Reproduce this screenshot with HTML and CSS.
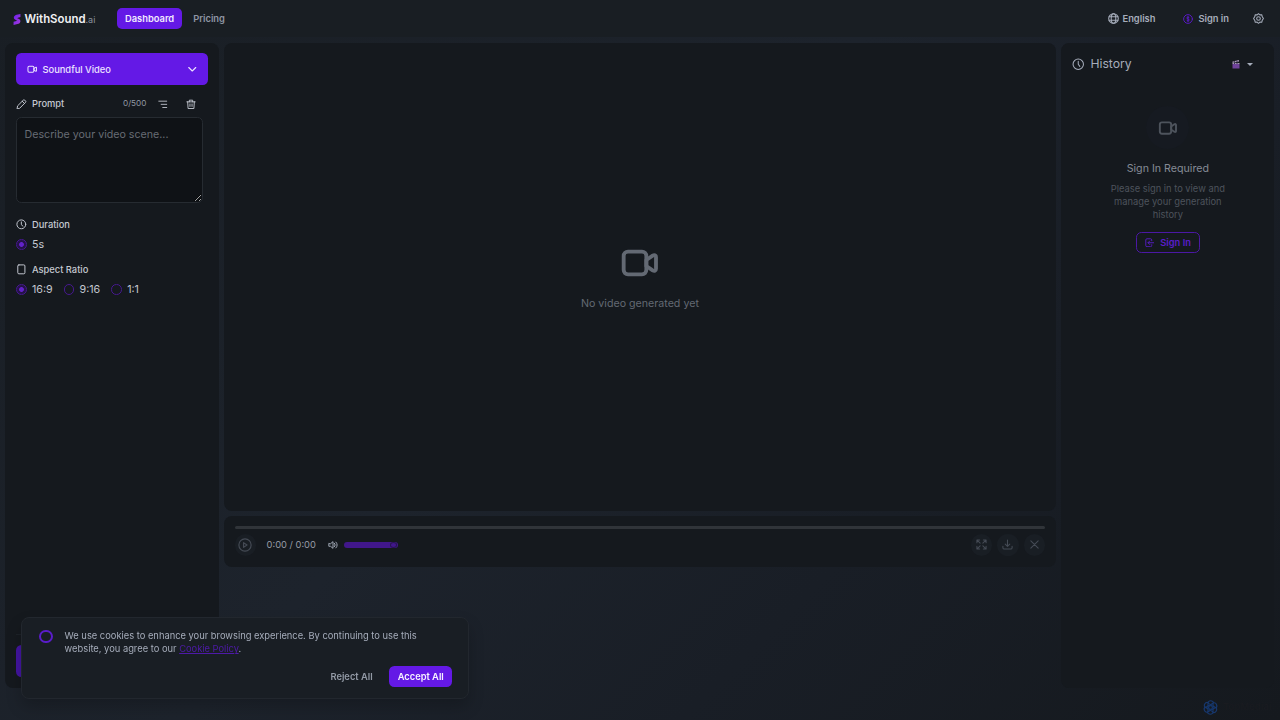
FILE: index.html
```
<!DOCTYPE html>
<html lang="en">
<head>
    <meta charset="UTF-8">
    <meta name="viewport" content="width=device-width, initial-scale=1.0">
    <title>Dashboard - WithSound.ai</title>
    <link rel="stylesheet" href="styles.css">
</head>
<body>
    <!-- Shared icons -->
    <svg class="sprite">
        <symbol id="video" viewBox="0 0 24 24">
            <rect x="2.2" y="5.200" width="13.600" height="13.600" rx="2.600"/>
            <path d="M15.800 10.200l3.800-2.600c1-.6 2-.3 2 .9v7c0 1.200-1 1.500-2 .9l-3.800-2.600z"/>
        </symbol>
        <symbol id="clock" viewBox="0 0 24 24">
            <circle cx="12" cy="12" r="10"/>
            <path d="M12 6.500V12l3 4"/>
        </symbol>
    </svg>

    <!-- Navbar -->
    <header class="navbar">
        <a class="brand" href="#">
            <svg class="brand-logo" viewBox="0 0 16 24">
                <defs>
                    <linearGradient id="logo-fill" x1="0" y1="0" x2="1" y2="1">
                        <stop offset="0" stop-color="#6a20f0"/>
                        <stop offset="1" stop-color="#a83bd8"/>
                    </linearGradient>
                </defs>
                <path fill="url(#logo-fill)" d="M7 1.500L15.500 0v6.500L10 8c-1.500.500-1.500 1.500 0 2l2.500 1c4.500 2.500 3.500 9-1.500 10.500L.500 24v-7l6-1.500c1.500-.500 1.500-1.500 0-2l-3-1.500C-1 9.500 1 3 7 1.500z"/>
            </svg>
            <span class="brand-name">WithSound</span><span class="brand-tld">.ai</span>
        </a>
        <nav class="nav-links">
            <a class="nav-link active" href="#">Dashboard</a>
            <a class="nav-link" href="#">Pricing</a>
        </nav>
        <div class="nav-right">
            <a class="language" href="#">
                <svg class="icon" viewBox="0 0 24 24"><circle cx="12" cy="12" r="10.500"/><ellipse cx="12" cy="12" rx="5" ry="10.500"/><path d="M2.500 8h19M2.500 16h19"/></svg>
                English
            </a>
            <a class="signin" href="#">
                <svg class="icon purple" viewBox="0 0 24 24"><circle cx="12" cy="12" r="10.500"/><path d="M15 9c-1-2-6-2-6 .500 0 3 6 2 6 5 0 2.500-5 2.500-6 .500M12 5.500v13"/></svg>
                Sign in
            </a>
            <svg class="icon settings" viewBox="0 0 24 24"><path d="M12 1.500l3 2.600 4.300-.300.700 4 2.700 4.200-2.700 4.200-.700 4-4.300-.300-3 2.600-3-2.600-4.300.300-.700-4L1.300 12 4 7.800l.700-4 4.300.300z"/><circle cx="12" cy="12" r="4"/></svg>
        </div>
    </header>

    <main class="layout">
        <!-- Generator form -->
        <aside class="panel sidebar">
            <button class="mode">
                <svg class="icon" viewBox="0 0 24 24"><use href="#video"/></svg>
                <span>Soundful Video</span>
                <svg class="icon chevron" viewBox="0 0 24 24"><path d="M4 8l8 8 8-8"/></svg>
            </button>

            <div class="label prompt-label">
                <svg class="icon" viewBox="0 0 24 24"><path d="M2.500 21.500l1-6L16.500 2.500c1-1 2-1 3 0l2 2c1 1 1 2 0 3L8.500 20.500zM14 5l5 5"/></svg>
                <span>Prompt</span>
                <span class="counter">0/500</span>
                <svg class="icon lines" viewBox="0 0 24 24"><path d="M2 4h20M8 12h14M12 20h10"/></svg>
                <svg class="icon trash" viewBox="0 0 24 24"><path d="M2 6h20M8 6V2h8v4M4 6l1 16h14l1-16M9.500 11v6M14.500 11v6"/></svg>
            </div>
            <textarea class="prompt" placeholder="Describe your video scene..."></textarea>

            <div class="label duration-label">
                <svg class="icon" viewBox="0 0 24 24"><use href="#clock"/></svg>
                <span>Duration</span>
            </div>
            <div class="options">
                <label><input type="radio" name="duration" checked>5s</label>
            </div>

            <div class="label ratio-label">
                <svg class="icon" viewBox="0 0 24 24"><rect x="4" y="2" width="16" height="20" rx="2.500"/></svg>
                <span>Aspect Ratio</span>
            </div>
            <div class="options">
                <label><input type="radio" name="ratio" checked>16:9</label>
                <label><input type="radio" name="ratio">9:16</label>
                <label><input type="radio" name="ratio">1:1</label>
            </div>

            <div class="generate-wrap">
                <div class="generate"></div>
            </div>
        </aside>

        <!-- Preview and player -->
        <section class="center">
            <div class="panel preview">
                <svg class="icon" viewBox="0 0 24 24"><use href="#video"/></svg>
                <p>No video generated yet</p>
            </div>
            <div class="panel player">
                <div class="progress"></div>
                <div class="controls">
                    <span class="round">
                        <svg class="icon play" viewBox="0 0 24 24"><circle cx="12" cy="12" r="10.500"/><path d="M9.500 8l6 4-6 4z"/></svg>
                    </span>
                    <span class="time">0:00 / 0:00</span>
                    <svg class="icon speaker" viewBox="0 0 24 24"><path d="M2 9v6h4l6 5V4L6 9zM15.500 8c2 2.500 2 5.500 0 8M19 5c4 4 4 10 0 14"/></svg>
                    <span class="volume"><i></i></span>
                    <div class="actions">
                        <span class="round"><svg class="icon" viewBox="0 0 24 24"><path d="M9 9L3 3M2 8V2h6M15 9l6-6M16 2h6v6M9 15l-6 6M2 16v6h6M15 15l6 6M16 22h6v-6"/></svg></span>
                        <span class="round"><svg class="icon" viewBox="0 0 24 24"><path d="M12 2v14M7 11l5 5 5-5M2 16v3c0 2 1 3 3 3h14c2 0 3-1 3-3v-3"/></svg></span>
                        <span class="round"><svg class="icon" viewBox="0 0 24 24"><path d="M4 4l16 16M20 4L4 20"/></svg></span>
                    </div>
                </div>
            </div>
        </section>

        <!-- History -->
        <aside class="panel history">
            <div class="history-head">
                <svg class="icon" viewBox="0 0 24 24"><use href="#clock"/></svg>
                <h2>History</h2>
                <svg class="clapper" viewBox="0 0 16 18"><path fill="#70439b" d="M1 8h14v9H1z"/><path fill="#a79bb5" d="M1 3l13-3v3L1 6zM1 6h14v2H1z"/><path stroke="#3b2b52" stroke-width="2" d="M4 2l2 4M9 1l2 4M4 7h2M9 7h2"/></svg>
                <span class="caret"></span>
            </div>
            <div class="empty">
                <span class="empty-icon"><svg class="icon" viewBox="0 0 24 24"><use href="#video"/></svg></span>
                <h3>Sign In Required</h3>
                <p>Please sign in to view and manage your generation history</p>
                <button class="signin-btn">
                    <svg class="icon" viewBox="0 0 24 24"><path d="M17 7V5c0-2-1-3-3-3H5C3 2 2 3 2 5v14c0 2 1 3 3 3h9c2 0 3-1 3-3v-2M23 12H8M12 7.500L7.500 12l4.500 4.500"/></svg>
                    Sign In
                </button>
            </div>
        </aside>
    </main>

    <!-- Cookie notice -->
    <div class="cookie">
        <div class="cookie-text">
            <span class="ring"></span>
            <p>We use cookies to enhance your browsing experience. By continuing to use this website, you agree to our <a href="#">Cookie Policy</a>.</p>
        </div>
        <div class="cookie-actions">
            <button class="reject">Reject All</button>
            <button class="accept">Accept All</button>
        </div>
    </div>

    <!-- Corner badge -->
    <div class="badge">
        <svg viewBox="0 0 24 24">
            <g fill="none" stroke="#17386f" stroke-width="1.800">
                <circle cx="12" cy="12" r="3"/>
                <path id="petal" d="M8 10V5c0-5 8-5 9 0M8 5l7 4"/>
                <use href="#petal" transform="rotate(60 12 12)"/>
                <use href="#petal" transform="rotate(120 12 12)"/>
                <use href="#petal" transform="rotate(180 12 12)"/>
                <use href="#petal" transform="rotate(240 12 12)"/>
                <use href="#petal" transform="rotate(300 12 12)"/>
            </g>
        </svg>
        <span>TopMediai</span>
    </div>
</body>
</html>
```
FILE: styles.css
```
* {
    box-sizing: border-box;
}

body {
    font-family: Inter, sans-serif;
    margin: 0;
    height: 100vh;
    overflow: hidden;
    display: flex;
    flex-direction: column;
    font-size: 9.33px;
    line-height: 13.33px;
    color: #a6adbb;
    background: linear-gradient(135deg, #191e24 0%, #1d232c 45%, #191e26 70%, #15191e 100%);
}

h2, h3, p {
    margin: 0;
    font-weight: 400;
}

a {
    color: inherit;
    text-decoration: none;
}

button {
    font: inherit;
    border: none;
    padding: 0;
}

.sprite {
    display: none;
}

.icon {
    width: 11px;
    height: 11px;
    flex: none;
    fill: none;
    stroke: currentColor;
    stroke-width: 2.3;
    stroke-linecap: round;
    stroke-linejoin: round;
}

.purple {
    color: #5a1bc8;
}

/* Navbar */
.navbar {
    display: flex;
    align-items: center;
    height: 37.3px;
    flex: none;
    padding: 0 16px 0 13px;
    background: #191e23;
    font-weight: 600;
}

.brand {
    display: flex;
    align-items: baseline;
    width: 104px;
    padding-top: 1px;
}

.brand-logo {
    width: 8px;
    height: 11px;
    margin-right: 3.5px;
    align-self: center;
}

.brand-name {
    font-size: 11.4px;
    line-height: 15px;
    color: #f0f1f4;
}

.brand-tld {
    font-size: 9px;
    font-weight: 400;
    color: #8b929e;
}

.nav-links {
    display: flex;
    gap: 3px;
}

.nav-link {
    padding: 4px 8px;
    border-radius: 5px;
    color: #8f96a3;
}

.nav-link.active {
    background: #6419e6;
    color: #f2eaff;
}

.nav-right {
    display: flex;
    align-items: center;
    margin-left: auto;
}

.language, .signin {
    display: flex;
    align-items: center;
}

.language {
    gap: 4px;
    margin-right: 28px;
}

.signin {
    gap: 5px;
    margin-right: 24px;
}

.signin .icon {
    width: 10px;
    height: 10px;
}

/* Layout */
.layout {
    display: grid;
    grid-template-columns: 213.3px 832px 213.3px;
    gap: 5.3px;
    height: 650.7px;
    padding: 5.3px 5.3px 0;
}

.panel {
    background: #15191e;
    border-radius: 8px;
}

.sidebar {
    display: flex;
    flex-direction: column;
    padding: 10.7px;
    color: #c5c9d2;
}

.mode {
    display: flex;
    align-items: center;
    gap: 5px;
    height: 32px;
    padding: 0 10.5px 0 11px;
    border-radius: 5.3px;
    background: #6419e6;
    color: #ece3ff;
    font-weight: 500;
}

.mode .icon {
    width: 10.5px;
    height: 10.5px;
}

.mode .chevron {
    margin-left: auto;
    stroke-width: 2.5;
}

.label {
    display: flex;
    align-items: center;
    gap: 5.3px;
    height: 14px;
    font-weight: 500;
}

.label .icon {
    width: 10.7px;
    height: 10.7px;
    stroke-width: 2.2;
}

.prompt-label {
    margin-top: 11.7px;
    padding-right: 5.7px;
}

.counter {
    margin-left: auto;
    font-size: 8.2px;
    font-weight: 400;
    color: #9298a3;
}

.label .lines {
    width: 9.5px;
    margin: 0 13px 0 6.7px;
}

.label .trash {
    width: 10px;
    margin-right: 6px;
}

.prompt {
    width: 186.7px;
    height: 86px;
    margin: 6.3px 0 0;
    padding: 8.6px 7.6px;
    border: 1px solid #262b31;
    border-radius: 5.3px;
    background: #0f1216;
    font-family: inherit;
    font-size: 10.67px;
    line-height: 16px;
    color: #a6adbb;
    resize: vertical;
}

.prompt::placeholder {
    color: #676c74;
}

.duration-label {
    margin-top: 14px;
}

.ratio-label {
    margin-top: 11px;
}

.options {
    display: flex;
    gap: 11px;
    margin-top: 6px;
    font-size: 10.67px;
}

.options label {
    display: flex;
    align-items: center;
    gap: 5.3px;
    height: 14px;
}

.options input {
    appearance: none;
    width: 10.7px;
    height: 10.7px;
    margin: 0;
    border: 1px solid #46188f;
    border-radius: 50%;
}

.options input:checked {
    background: radial-gradient(circle, #6222c9 2px, #251249 2.8px);
}

.generate-wrap {
    margin-top: auto;
    padding-top: 10px;
    border-top: 1px solid #1d2228;
}

.generate {
    height: 32px;
    border-radius: 5.3px;
    background: #4315a0;
}

/* Center column */
.center {
    display: flex;
    flex-direction: column;
    gap: 5.3px;
}

.preview {
    display: flex;
    flex-direction: column;
    align-items: center;
    height: 468px;
    padding-top: 200.8px;
    font-size: 10.67px;
    line-height: 16px;
    color: #636973;
}

.preview .icon {
    width: 40px;
    height: 40px;
    margin-bottom: 12.2px;
}

.player {
    height: 50.7px;
    padding: 10.4px 10.7px;
}

.progress {
    height: 2.7px;
    border-radius: 2px;
    background: #303439;
}

.controls {
    display: flex;
    align-items: center;
    height: 21.3px;
    margin-top: 5.3px;
}

.round {
    display: flex;
    align-items: center;
    justify-content: center;
    width: 21.3px;
    height: 21.3px;
    border-radius: 50%;
    background: #191e24;
    color: #454b55;
}

.round .play {
    width: 14px;
    height: 14px;
    stroke-width: 2;
}

.time {
    margin: 0 12px 0 10.7px;
    color: #969ba5;
}

.speaker {
    width: 10px;
    height: 10px;
    margin-right: 6px;
}

.volume {
    display: flex;
    align-items: center;
    justify-content: flex-end;
    width: 54px;
    height: 5.3px;
    border-radius: 3px;
    background: #41178b;
}

.volume i {
    width: 7px;
    height: 5.3px;
    margin-right: 1px;
    border: 1.5px solid #281451;
    border-radius: 50%;
}

.actions {
    display: flex;
    gap: 5.3px;
    margin-left: auto;
}

/* History */
.history {
    padding: 10.7px;
}

.history-head {
    display: flex;
    align-items: center;
    height: 21px;
}

.history-head .icon {
    width: 12.5px;
    height: 12.5px;
    margin: 0 5.5px 0 0.5px;
    stroke-width: 2;
}

.history-head h2 {
    font-size: 12.2px;
}

.clapper {
    width: 8px;
    height: 9px;
    margin: 2px 0 0 auto;
}

.caret {
    margin: 2px 10.5px 0 7px;
    border: 3px solid transparent;
    border-top-color: #a6adbb;
    border-bottom: 0;
}

.empty {
    display: flex;
    flex-direction: column;
    align-items: center;
    padding-top: 32px;
    text-align: center;
    color: #4d535c;
}

.empty-icon {
    display: flex;
    align-items: center;
    justify-content: center;
    width: 42.7px;
    height: 42.7px;
    border-radius: 50%;
    background: #161a21;
}

.empty-icon .icon {
    width: 20px;
    height: 20px;
}

.empty h3 {
    margin: 12px 0 4.8px;
    font-size: 10.67px;
    line-height: 16px;
    color: #858b96;
}

.empty p {
    width: 128px;
}

.signin-btn {
    display: flex;
    align-items: center;
    gap: 6px;
    height: 21.3px;
    margin-top: 10.2px;
    padding: 0 8px;
    border: 1px solid #4b18a5;
    border-radius: 5.3px;
    background: none;
    color: #5a1dca;
    font-weight: 600;
}

.signin-btn .icon {
    width: 9.5px;
    height: 9.5px;
}

/* Cookie notice */
.cookie {
    position: fixed;
    left: 21.3px;
    bottom: 21.3px;
    width: 448px;
    height: 81.3px;
    padding: 10.7px 16px;
    border: 1px solid #22272e;
    border-radius: 8px;
    background: #191e24;
    box-shadow: 0 8px 16px rgba(0, 0, 0, 0.2);
}

.cookie-text {
    display: flex;
    gap: 12px;
}

.ring {
    flex: none;
    width: 13.3px;
    height: 13.3px;
    margin: 1px 0 0 1px;
    border: 2px solid #5a1dca;
    border-radius: 50%;
}

.cookie-text a {
    color: #4e1aa9;
    text-decoration: underline;
}

.cookie-actions {
    display: flex;
    justify-content: flex-end;
    gap: 8px;
    margin-top: 10.4px;
}

.cookie-actions button {
    height: 21.3px;
    padding: 0 8.5px;
    border-radius: 5.3px;
    background: none;
    color: #9299a5;
    font-weight: 600;
}

.cookie-actions .accept {
    background: #6419e6;
    color: #f7f2ff;
}

/* Corner badge */
.badge {
    position: fixed;
    right: 6px;
    bottom: 5px;
    display: flex;
    align-items: center;
    gap: 5px;
    width: 71px;
    height: 16px;
    font-size: 9.6px;
    font-weight: 600;
    color: #191b20;
}

.badge svg {
    flex: none;
    width: 15px;
    height: 15px;
    overflow: visible;
}
```
